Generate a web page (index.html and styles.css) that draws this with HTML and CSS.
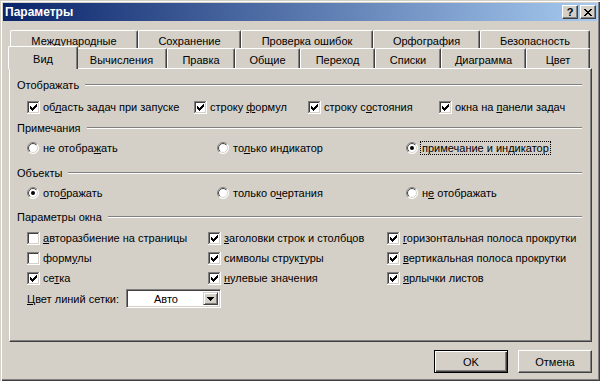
FILE: index.html
```html
<!DOCTYPE html>
<html lang="ru">
<head>
<meta charset="utf-8">
<title>Параметры</title>
<link rel="stylesheet" href="styles.css">
</head>
<body>
<svg class="defs" width="0" height="0" aria-hidden="true">
  <defs>
    <linearGradient id="rg-outer" x1="0" y1="0" x2="1" y2="1">
      <stop offset="0.5" stop-color="#808080"/>
      <stop offset="0.5" stop-color="#ffffff"/>
    </linearGradient>
    <linearGradient id="rg-inner" x1="0" y1="0" x2="1" y2="1">
      <stop offset="0.5" stop-color="#404040"/>
      <stop offset="0.5" stop-color="#d4d0c8"/>
    </linearGradient>
    <symbol id="cb-off" viewBox="0 0 13 13">
      <path d="M0 0h13v13H0z" fill="#fff"/>
      <path d="M0 0h12v1H1v11H0z" fill="#808080"/>
      <path d="M1 1h10v1H2v9H1z" fill="#404040"/>
      <path d="M12 0h1v13H0v-1h12z" fill="#fff"/>
      <path d="M11 1h1v11H1v-1h10z" fill="#d4d0c8"/>
    </symbol>
    <symbol id="cb-on" viewBox="0 0 13 13">
      <use href="#cb-off"/>
      <path d="M3 5h1v1h1v1h1V6h1V5h1V4h1V3h1v3H9v1H8v1H7v1H6v1H5V9H4V8H3z" fill="#000"/>
    </symbol>
    <symbol id="rb-off" viewBox="0 0 12 12">
      <circle cx="6" cy="6" r="5.5" fill="#fff" stroke="url(#rg-outer)" stroke-width="1"/>
      <circle cx="6" cy="6" r="4.5" fill="#fff" stroke="url(#rg-inner)" stroke-width="1"/>
    </symbol>
    <symbol id="rb-on" viewBox="0 0 12 12">
      <use href="#rb-off"/>
      <circle cx="6" cy="6" r="2" fill="#000"/>
    </symbol>
  </defs>
</svg>

<div class="window">
  <div class="titlebar">
    <span class="title">Параметры</span>
    <div class="tbtns">
      <span class="tbtn help">?</span>
      <span class="tbtn"><svg width="8" height="7" viewBox="0 0 8 7" shape-rendering="crispEdges"><path d="M0 0h2v1h1v1h2V1h1V0h2v1H7v1H6v1H5v1h1v1h1v1h1v1H6V6H5V5H3v1H2v1H0V6h1V5h1V4h1V3H2V2H1V1H0z" fill="#000"/></svg></span>
    </div>
  </div>

  <div class="content">
    <div class="tabs">
      <div class="tabrow back">
        <div class="tab t-intl">Международные</div>
        <div class="tab t-save">Сохранение</div>
        <div class="tab t-check">Проверка ошибок</div>
        <div class="tab t-spell">Орфография</div>
        <div class="tab t-sec">Безопасность</div>
      </div>
      <div class="tabrow front">
        <div class="tab sel t-view">Вид</div>
        <div class="tab t-calc">Вычисления</div>
        <div class="tab t-edit">Правка</div>
        <div class="tab t-gen">Общие</div>
        <div class="tab t-trans">Переход</div>
        <div class="tab t-lists">Списки</div>
        <div class="tab t-chart">Диаграмма</div>
        <div class="tab t-color">Цвет</div>
      </div>
    </div>

    <div class="panel">
      <div class="gtitle"><span>Отображать</span><i class="rule"></i></div>
      <div class="row cols-show">
        <div class="opt"><svg class="cb"><use href="#cb-on"/></svg><span>об<u>л</u>асть задач при запуске</span></div>
        <div class="opt"><svg class="cb"><use href="#cb-on"/></svg><span>строку <u>ф</u>ормул</span></div>
        <div class="opt"><svg class="cb"><use href="#cb-on"/></svg><span>строку с<u>о</u>стояния</span></div>
        <div class="opt"><svg class="cb"><use href="#cb-on"/></svg><span>окна на <u>п</u>анели задач</span></div>
      </div>

      <div class="gtitle g2"><span>Примечания</span><i class="rule"></i></div>
      <div class="row cols-radio r1">
        <div class="opt radio"><svg class="rb"><use href="#rb-off"/></svg><span>не отобра<u>ж</u>ать</span></div>
        <div class="opt radio"><svg class="rb"><use href="#rb-off"/></svg><span>то<u>л</u>ько индикатор</span></div>
        <div class="opt radio"><svg class="rb"><use href="#rb-on"/></svg><span class="focus">примечание и индикатор</span></div>
      </div>

      <div class="gtitle g3"><span>Объекты</span><i class="rule"></i></div>
      <div class="row cols-radio r1">
        <div class="opt radio"><svg class="rb"><use href="#rb-on"/></svg><span>ото<u>б</u>ражать</span></div>
        <div class="opt radio"><svg class="rb"><use href="#rb-off"/></svg><span>только о<u>ч</u>ертания</span></div>
        <div class="opt radio"><svg class="rb"><use href="#rb-off"/></svg><span>н<u>е</u> отображать</span></div>
      </div>

      <div class="gtitle g4"><span>Параметры окна</span><i class="rule"></i></div>
      <div class="grid-win">
        <div class="opt"><svg class="cb"><use href="#cb-off"/></svg><span><u>а</u>вторазбиение на страницы</span></div>
        <div class="opt"><svg class="cb"><use href="#cb-on"/></svg><span><u>з</u>аголовки строк и столбцов</span></div>
        <div class="opt"><svg class="cb"><use href="#cb-on"/></svg><span><u>г</u>оризонтальная полоса прокрутки</span></div>
        <div class="opt"><svg class="cb"><use href="#cb-off"/></svg><span>форм<u>у</u>лы</span></div>
        <div class="opt"><svg class="cb"><use href="#cb-on"/></svg><span>символы струк<u>т</u>уры</span></div>
        <div class="opt"><svg class="cb"><use href="#cb-on"/></svg><span><u>в</u>ертикальная полоса прокрутки</span></div>
        <div class="opt"><svg class="cb"><use href="#cb-on"/></svg><span>се<u>т</u>ка</span></div>
        <div class="opt"><svg class="cb"><use href="#cb-on"/></svg><span><u>н</u>улевые значения</span></div>
        <div class="opt"><svg class="cb"><use href="#cb-on"/></svg><span><u>я</u>рлычки листов</span></div>
      </div>

      <div class="color-row">
        <span class="color-label"><u>Ц</u>вет линий сетки:</span>
        <div class="combo">
          <span class="combo-value">Авто</span>
          <span class="combo-btn"><svg width="7" height="4" viewBox="0 0 7 4" shape-rendering="crispEdges"><path d="M0 0h7v1H6v1H5v1H4v1H3V3H2V2H1V1H0z" fill="#000"/></svg></span>
        </div>
      </div>
    </div>

    <div class="buttons">
      <div class="btn default">OK</div>
      <div class="btn">Отмена</div>
    </div>
  </div>
</div>
</body>
</html>
```

FILE: styles.css
```css
* {
  box-sizing: border-box;
}

html, body {
  margin: 0;
  padding: 0;
}

body {
  width: 600px;
  height: 381px;
  overflow: hidden;
  background: #d4d0c8;
  font-family: "Liberation Sans", Arial, sans-serif;
  font-size: 11px;
  color: #000;
}

.defs {
  position: absolute;
  width: 0;
  height: 0;
  overflow: hidden;
}

u {
  text-decoration: underline;
  text-underline-offset: 1px;
}

.window {
  width: 600px;
  height: 381px;
  padding: 3px;
  background: #d4d0c8;
  box-shadow: inset 1px 1px #d4d0c8, inset 2px 2px #ffffff, inset -1px -1px #404040, inset -2px -2px #808080;
  display: flex;
  flex-direction: column;
}

/* Title bar */
.titlebar {
  height: 18px;
  flex: none;
  background: linear-gradient(to right, #0a246a, #a6caf0);
  display: flex;
  align-items: center;
  justify-content: space-between;
  padding: 0 1px 0 2px;
}

.title {
  color: #fff;
  font-weight: bold;
  font-size: 12px;
  line-height: 14px;
}

.tbtns {
  display: flex;
  gap: 2px;
}

.tbtn {
  width: 16px;
  height: 14px;
  background: #d4d0c8;
  border-top: 1px solid #fff;
  border-left: 1px solid #fff;
  border-right: 1px solid #404040;
  border-bottom: 1px solid #404040;
  box-shadow: inset -1px -1px #808080;
  display: flex;
  align-items: center;
  justify-content: center;
}

.tbtn.help {
  font-weight: bold;
  font-size: 11px;
  line-height: 12px;
}

/* Content */
.content {
  flex: 1;
  padding: 9px 5px 0 6px;
  display: flex;
  flex-direction: column;
}

.tabs {
  margin-left: 1px;
  width: 580px;
}

.tabrow {
  display: flex;
}

.tab {
  flex: none;
  text-align: center;
  white-space: nowrap;
  background: #d4d0c8;
  border-top: 1px solid #fff;
  border-left: 1px solid #fff;
  border-right: 1px solid #404040;
  box-shadow: inset -1px 0 #808080;
  border-radius: 2px 2px 0 0;
}

.back .tab {
  height: 18px;
  padding-top: 3px;
  line-height: 14px;
}

.front .tab {
  height: 20px;
  padding-top: 4px;
  line-height: 14px;
}

.front .tab.sel {
  position: relative;
  z-index: 2;
  height: 23px;
  margin: -2px -2px -1px -2px;
  padding-top: 5px;
}

.t-intl { width: 128px; }
.t-save { width: 103px; }
.t-check { width: 132px; }
.t-spell { width: 107px; }
.t-sec { width: 110px; }

.t-view { width: 70px; }
.t-calc { width: 91px; }
.t-edit { width: 68px; }
.t-gen { width: 65px; }
.t-trans { width: 75px; }
.t-lists { width: 66px; }
.t-chart { width: 85px; }
.t-color { width: 64px; }

/* Panel */
.panel {
  height: 274px;
  flex: none;
  border-top: 1px solid #fff;
  border-left: 1px solid #fff;
  border-right: 1px solid #404040;
  border-bottom: 1px solid #404040;
  box-shadow: inset -1px -1px #808080;
  padding: 9px 9px 0 7px;
}

.gtitle {
  display: flex;
  align-items: center;
  height: 14px;
  line-height: 14px;
}

.gtitle.g2 { margin-top: 4px; }
.gtitle.g3 { margin-top: 8px; }
.gtitle.g4 { margin-top: 7px; }

.rule {
  flex: 1;
  height: 2px;
  border-top: 1px solid #808080;
  border-bottom: 1px solid #fff;
  margin-left: 6px;
}

.row {
  display: grid;
  height: 20px;
  align-items: center;
  padding-left: 10px;
}

.cols-show {
  margin-top: 5px;
  grid-template-columns: 167px 114px 131px 1fr;
}

.cols-radio {
  grid-template-columns: 190px 189px 1fr;
}

.r1 {
  margin-top: 3px;
}

.opt {
  display: flex;
  align-items: center;
  gap: 3px;
  white-space: nowrap;
  line-height: 13px;
}

.opt.radio {
  gap: 4px;
}

.cb {
  width: 13px;
  height: 13px;
  flex: none;
}

.rb {
  width: 12px;
  height: 12px;
  flex: none;
}

.focus {
  border: 1px dotted #000;
  padding: 0 1px;
  margin-left: -2px;
  line-height: 12px;
}

.grid-win {
  margin-top: 4px;
  padding-left: 10px;
  display: grid;
  grid-template-columns: 181px 179px 1fr;
  grid-auto-rows: 20px;
  align-items: center;
}

.color-row {
  height: 21px;
  display: flex;
  align-items: center;
  padding-left: 10px;
}

.color-label {
  width: 99px;
  flex: none;
  white-space: nowrap;
}

.combo {
  width: 95px;
  height: 19px;
  background: #fff;
  border-top: 1px solid #808080;
  border-left: 1px solid #808080;
  border-right: 1px solid #fff;
  border-bottom: 1px solid #fff;
  box-shadow: inset 1px 1px #404040, inset -1px -1px #d4d0c8;
  display: flex;
  align-items: center;
  padding: 2px;
}

.combo-value {
  flex: 1;
  text-align: center;
}

.combo-btn {
  width: 15px;
  height: 13px;
  background: #d4d0c8;
  border-top: 1px solid #d4d0c8;
  border-left: 1px solid #d4d0c8;
  border-right: 1px solid #404040;
  border-bottom: 1px solid #404040;
  box-shadow: inset 1px 1px #fff, inset -1px -1px #808080;
  display: flex;
  align-items: center;
  justify-content: center;
}

/* Buttons */
.buttons {
  display: flex;
  justify-content: flex-end;
  gap: 10px;
  margin-top: 8px;
}

.btn {
  width: 74px;
  height: 23px;
  display: flex;
  align-items: center;
  justify-content: center;
  background: #d4d0c8;
  border-top: 1px solid #fff;
  border-left: 1px solid #fff;
  border-right: 1px solid #404040;
  border-bottom: 1px solid #404040;
  box-shadow: inset -1px -1px #808080;
}

.btn.default {
  border: 1px solid #000;
  box-shadow: inset 1px 1px #fff, inset -1px -1px #404040, inset -2px -2px #808080;
}
```
